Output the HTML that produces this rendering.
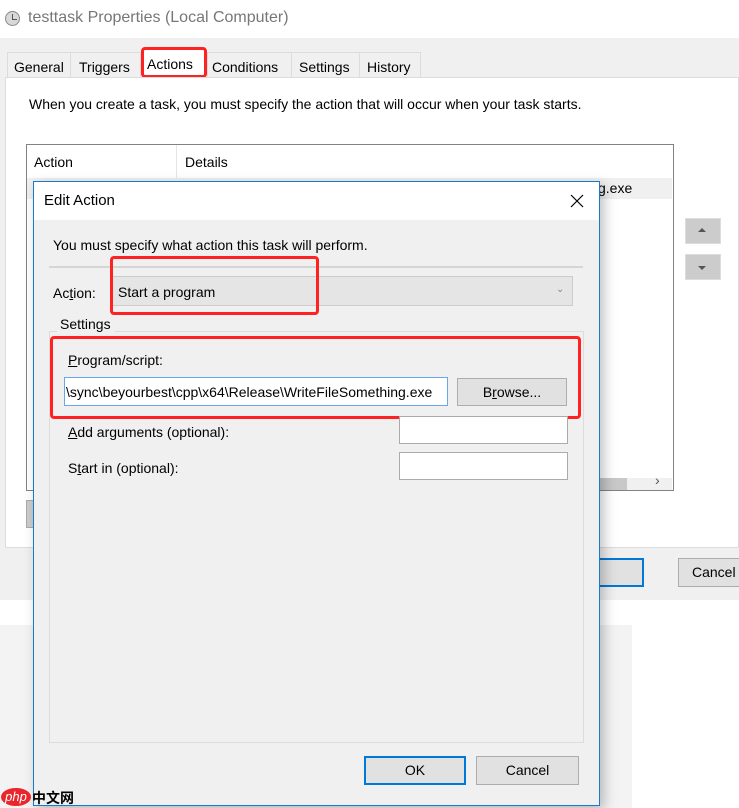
<!DOCTYPE html>
<html><head><meta charset="utf-8"><style>
*{box-sizing:border-box;margin:0;padding:0}
body{width:739px;height:808px;position:relative;overflow:hidden;background:#fff;font-family:"Segoe UI","Liberation Sans",sans-serif;font-size:14px;color:#000}
.a{position:absolute}
.t{position:absolute;white-space:nowrap;line-height:18px}
.btn{position:absolute;background:#e1e1e1;border:1px solid #adadad;text-align:center;line-height:26px}
.red{position:absolute;border:3px solid #f22;border-radius:4px}
.inp{position:absolute;background:#fff;border:1px solid #aaa}
u{text-decoration:underline}
</style></head><body>
<!-- title bar -->
<div class="a" style="left:0;top:0;width:739px;height:38px;background:#fff"></div>
<div class="a" style="left:5px;top:11px;width:15px;height:15px;border-radius:50%;background:#d8d8d8;border:1px solid #888"></div>
<div class="a" style="left:12px;top:14px;width:1px;height:6px;background:#555"></div>
<div class="a" style="left:12px;top:19px;width:5px;height:1px;background:#555"></div>
<div class="t" style="left:28px;top:9px;font-size:16px;color:#777">testtask Properties (Local Computer)</div>
<!-- main gray -->
<div class="a" style="left:0;top:38px;width:739px;height:562px;background:#f0f0f0"></div>
<!-- tabs -->
<div class="a" style="left:7px;top:52px;width:414px;height:26px;background:#f0f0f0;border:1px solid #dcdcdc;border-bottom:none"></div>
<div class="a" style="left:70px;top:52px;width:1px;height:25px;background:#dcdcdc"></div>
<div class="a" style="left:140px;top:52px;width:1px;height:25px;background:#dcdcdc"></div>
<div class="a" style="left:207px;top:52px;width:1px;height:25px;background:#dcdcdc"></div>
<div class="a" style="left:291px;top:52px;width:1px;height:25px;background:#dcdcdc"></div>
<div class="a" style="left:359px;top:52px;width:1px;height:25px;background:#dcdcdc"></div>
<div class="a" style="left:141px;top:48px;width:66px;height:30px;background:#fff"></div>
<div class="t" style="left:14px;top:58px">General</div>
<div class="t" style="left:79px;top:58px">Triggers</div>
<div class="t" style="left:147px;top:55px">Actions</div>
<div class="t" style="left:212px;top:58px">Conditions</div>
<div class="t" style="left:299px;top:58px">Settings</div>
<div class="t" style="left:367px;top:58px">History</div>
<div class="red" style="left:141px;top:47px;width:66px;height:31px"></div>
<!-- tab panel -->
<div class="a" style="left:5px;top:77px;width:734px;height:471px;background:#fff;border:1px solid #dcdcdc"></div>
<div class="t" style="left:29px;top:95px">When you create a task, you must specify the action that will occur when your task starts.</div>
<div class="a" style="left:26px;top:144px;width:648px;height:347px;background:#fff;border:1px solid #828282"></div>
<div class="t" style="left:34px;top:153px">Action</div>
<div class="a" style="left:176px;top:145px;width:1px;height:33px;background:#e5e5e5"></div>
<div class="t" style="left:185px;top:153px">Details</div>
<div class="a" style="left:27px;top:178px;width:645px;height:21px;background:#f0f0f0"></div>
<div class="t" style="left:598px;top:179px">g.exe</div>
<div class="a" style="left:600px;top:478px;width:72px;height:12px;background:#f0f0f0"></div>
<div class="a" style="left:600px;top:478px;width:27px;height:12px;background:#c8c8c8"></div>
<div class="t" style="left:655px;top:471px;color:#555">›</div>
<div class="a" style="left:685px;top:218px;width:36px;height:26px;background:#ccc;border:1px solid #ddd"></div>
<div class="a" style="left:698px;top:228px;border-left:4px solid transparent;border-right:4px solid transparent;border-bottom:4px solid #555"></div>
<div class="a" style="left:685px;top:254px;width:36px;height:26px;background:#ccc;border:1px solid #ddd"></div>
<div class="a" style="left:698px;top:266px;border-left:4px solid transparent;border-right:4px solid transparent;border-top:4px solid #555"></div>
<div class="a" style="left:26px;top:500px;width:10px;height:28px;background:#ccc;border:1px solid #aaa"></div>
<!-- bottom buttons of parent -->
<div class="a" style="left:580px;top:558px;width:64px;height:29px;background:#e1e1e1;border:2px solid #0078d7"></div>
<div class="btn" style="left:678px;top:558px;width:70px;height:29px;text-align:left;padding-left:13px">Cancel</div>
<!-- below -->
<div class="a" style="left:0;top:600px;width:739px;height:208px;background:#fff"></div>
<div class="a" style="left:0;top:625px;width:632px;height:183px;background:#f3f3f3"></div>
<!-- Edit Action dialog -->
<div class="a" style="left:33px;top:181px;width:567px;height:625px;background:#f0f0f0;border:1px solid #1979ca;box-shadow:4px 4px 12px rgba(0,0,0,.25)"></div>
<div class="a" style="left:34px;top:182px;width:565px;height:38px;background:#fff"></div>
<div class="t" style="left:44px;top:192px;font-size:15px">Edit Action</div>
<svg class="a" style="left:570px;top:194px" width="14" height="14"><path d="M1 1L13 13M13 1L1 13" stroke="#000" stroke-width="1.2"/></svg>
<div class="t" style="left:53px;top:236px">You must specify what action this task will perform.</div>
<div class="a" style="left:49px;top:266px;width:534px;height:2px;background:#d5d5d5"></div>
<div class="t" style="left:53px;top:284px">Ac<u>t</u>ion:</div>
<div class="a" style="left:111px;top:276px;width:462px;height:30px;background:#e5e5e5;border:1px solid #ccc"></div>
<div class="t" style="left:118px;top:283px">Start a program</div>
<div class="t" style="left:556px;top:281px;font-size:10px;color:#888">⌄</div>
<div class="red" style="left:110px;top:256px;width:209px;height:59px"></div>
<div class="a" style="left:49px;top:331px;width:535px;height:412px;border:1px solid #dcdcdc"></div>
<div class="a" style="left:57px;top:320px;width:58px;height:16px;background:#f0f0f0"></div>
<div class="t" style="left:60px;top:315px">Settings</div>
<div class="t" style="left:68px;top:351px"><u>P</u>rogram/script:</div>
<div class="a" style="left:64px;top:377px;width:384px;height:29px;background:#fff;border:1px solid #6aa7e6"></div>
<div class="t" style="left:66px;top:383px">\sync\beyourbest\cpp\x64\Release\WriteFileSomething.exe</div>
<div class="btn" style="left:457px;top:378px;width:110px;height:28px">B<u>r</u>owse...</div>
<div class="red" style="left:50px;top:336px;width:531px;height:83px"></div>
<div class="t" style="left:68px;top:423px"><u>A</u>dd arguments (optional):</div>
<div class="inp" style="left:399px;top:416px;width:169px;height:28px"></div>
<div class="t" style="left:68px;top:459px">S<u>t</u>art in (optional):</div>
<div class="inp" style="left:399px;top:452px;width:169px;height:28px"></div>
<div class="a" style="left:364px;top:756px;width:102px;height:29px;background:#e1e1e1;border:2px solid #0078d7;text-align:center;line-height:25px">OK</div>
<div class="btn" style="left:476px;top:756px;width:103px;height:29px">Cancel</div>
<!-- watermark -->
<div class="a" style="left:1px;top:788px;width:30px;height:18px;border-radius:50%;background:#e8262b;color:#fff;font-size:13px;font-style:italic;text-align:center;line-height:17px;font-family:'Liberation Sans',sans-serif">php</div>
<div class="t" style="left:32px;top:789px;font-size:14px;font-family:'Liberation Sans','Noto Sans CJK SC',sans-serif;font-weight:bold">中文网</div>
</body></html>
